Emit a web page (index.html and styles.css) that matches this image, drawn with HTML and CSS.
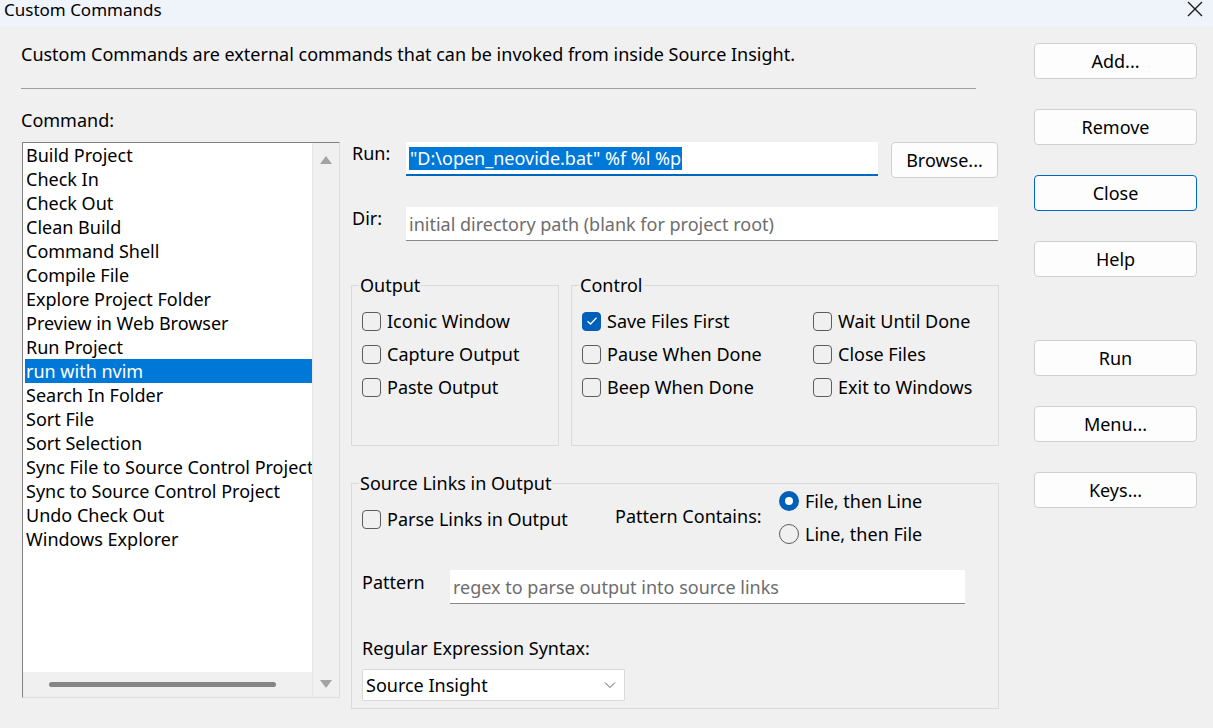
FILE: index.html
```html
<!DOCTYPE html>
<html>
<head>
<meta charset="utf-8">
<link rel="stylesheet" href="styles.css">
</head>
<body>
<div class="window">
  <div class="titlebar">
    <span class="title">Custom Commands</span>
    <svg class="close-x" width="16" height="16" viewBox="0 0 16 16"><path d="M1 1 L15 15 M15 1 L1 15" stroke="#1a1a1a" stroke-width="1.4" fill="none"/></svg>
  </div>
  <div class="content">
    <div class="main">
      <p class="desc">Custom Commands are external commands that can be invoked from inside Source Insight.</p>
      <div class="rule"></div>
      <div class="cmd-label">Command:</div>
      <div class="work">
        <div class="listbox">
          <div class="list-items">
            <div class="item">Build Project</div>
            <div class="item">Check In</div>
            <div class="item">Check Out</div>
            <div class="item">Clean Build</div>
            <div class="item">Command Shell</div>
            <div class="item">Compile File</div>
            <div class="item">Explore Project Folder</div>
            <div class="item">Preview in Web Browser</div>
            <div class="item">Run Project</div>
            <div class="item selected">run with nvim</div>
            <div class="item">Search In Folder</div>
            <div class="item">Sort File</div>
            <div class="item">Sort Selection</div>
            <div class="item">Sync File to Source Control Project</div>
            <div class="item">Sync to Source Control Project</div>
            <div class="item">Undo Check Out</div>
            <div class="item">Windows Explorer</div>
          </div>
          <div class="vscroll">
            <svg class="arrow" width="12" height="8" viewBox="0 0 12 8"><path d="M6 0 L12 8 L0 8 Z" fill="#a3a3a3"/></svg>
            <svg class="arrow" width="12" height="8" viewBox="0 0 12 8"><path d="M0 0 L12 0 L6 8 Z" fill="#a3a3a3"/></svg>
          </div>
          <div class="hscroll"><div class="hthumb"></div></div>
        </div>
        <div class="panel">
          <div class="field-row run-row">
            <span class="field-label">Run:</span>
            <div class="textbox active"><span class="sel">"D:\open_neovide.bat" %f %l %p</span></div>
            <button class="btn browse">Browse...</button>
          </div>
          <div class="field-row dir-row">
            <span class="field-label">Dir:</span>
            <div class="textbox wide"><span class="placeholder">initial directory path (blank for project root)</span></div>
          </div>
          <div class="groups">
            <fieldset class="group output">
              <legend>Output</legend>
              <div class="checks">
                <label class="check"><span class="box"></span>Iconic Window</label>
                <label class="check"><span class="box"></span>Capture Output</label>
                <label class="check"><span class="box"></span>Paste Output</label>
              </div>
            </fieldset>
            <fieldset class="group control">
              <legend>Control</legend>
              <div class="control-grid">
                <label class="check"><span class="box checked"><svg width="12" height="10" viewBox="0 0 12 10"><path d="M1.5 5.2 L4.5 8 L10.5 1.8" stroke="#fff" stroke-width="1.3" fill="none"/></svg></span>Save Files First</label>
                <label class="check"><span class="box"></span>Wait Until Done</label>
                <label class="check"><span class="box"></span>Pause When Done</label>
                <label class="check"><span class="box"></span>Close Files</label>
                <label class="check"><span class="box"></span>Beep When Done</label>
                <label class="check"><span class="box"></span>Exit to Windows</label>
              </div>
            </fieldset>
          </div>
          <fieldset class="group links">
            <legend>Source Links in Output</legend>
            <div class="links-top">
              <label class="check parse"><span class="box"></span>Parse Links in Output</label>
              <span class="pc-label">Pattern Contains:</span>
              <div class="radios">
                <label class="radio"><span class="dot on"></span>File, then Line</label>
                <label class="radio"><span class="dot"></span>Line, then File</label>
              </div>
            </div>
            <div class="pattern-row">
              <span class="pattern-label">Pattern</span>
              <div class="textbox pattern"><span class="placeholder">regex to parse output into source links</span></div>
            </div>
            <div class="syntax-label">Regular Expression Syntax:</div>
            <div class="combo">
              <span>Source Insight</span>
              <svg width="12" height="8" viewBox="0 0 12 8"><path d="M1 1.5 L6 6.5 L11 1.5" stroke="#5c5c5c" stroke-width="1" fill="none"/></svg>
            </div>
          </fieldset>
        </div>
      </div>
    </div>
    <div class="buttons">
      <button class="btn side">Add...</button>
      <button class="btn side">Remove</button>
      <button class="btn side default">Close</button>
      <button class="btn side">Help</button>
      <button class="btn side run">Run</button>
      <button class="btn side">Menu...</button>
      <button class="btn side">Keys...</button>
    </div>
  </div>
</div>
</body>
</html>
```

FILE: styles.css
```css
* { box-sizing: border-box; }
html, body { margin: 0; padding: 0; }
body {
  width: 1213px;
  height: 728px;
  overflow: hidden;
  background: #f0f0f0;
  font-family: "Noto Sans", "Open Sans", sans-serif;
  font-size: 18px;
  color: #000;
}
.window { width: 1213px; height: 728px; display: flex; flex-direction: column; }
.titlebar {
  height: 27px;
  background: #eff3fa;
  display: flex;
  align-items: flex-start;
  justify-content: space-between;
  padding: 0 10px 0 4px;
}
.title { font-size: 17px; line-height: 20px; }
.close-x { margin-top: 1px; }
.content { flex: 1; display: flex; }
.main { width: 1000px; padding-left: 21px; }
.desc { margin: 15px 0 0; line-height: 24px; }
.rule { width: 955px; height: 1px; background: #a0a0a0; margin-top: 22px; }
.cmd-label { margin-top: 19px; line-height: 24px; }
.work { display: flex; margin-top: 10px; gap: 11px; }
.listbox {
  margin-left: 1px;
  width: 318px;
  height: 556px;
  background: #fff;
  border-top: 1px solid #828282;
  border-left: 1px solid #828282;
  border-right: 1px solid #dedede;
  border-bottom: 1px solid #dedede;
  display: grid;
  grid-template-columns: 289px 27px;
  grid-template-rows: 1fr 25px;
}
.list-items { overflow: hidden; padding: 0 0 0 2px; }
.item { height: 24px; line-height: 24px; white-space: nowrap; padding-left: 1px; }
.item.selected { background: #0078d7; color: #fff; }
.vscroll {
  grid-row: 1 / 3;
  grid-column: 2;
  background: #f0f0f0;
  border-left: 1px solid #e6e6e6;
  display: flex;
  flex-direction: column;
  justify-content: space-between;
  align-items: center;
  padding: 13px 0 9px;
}
.hscroll {
  grid-row: 2;
  grid-column: 1;
  background: #f0f0f0;
  display: flex;
  align-items: center;
  padding-left: 26px;
}
.hthumb { width: 227px; height: 5px; border-radius: 3px; background: #858585; }
.panel { width: 648px; display: flex; flex-direction: column; }
.field-row { display: flex; align-items: flex-start; }
.field-label { width: 55px; padding-left: 1px; line-height: 24px; margin-top: -1px; }
.textbox {
  height: 34px;
  background: #fff;
  border-bottom: 1px solid #8a8a8a;
  display: flex;
  align-items: center;
  padding-left: 3px;
  white-space: nowrap;
  overflow: hidden;
}
.textbox.active { width: 472px; border-bottom: 2px solid #0067c0; }
.sel { background: #0078d7; color: #fff; line-height: 23px; padding: 0 1px; }
.textbox.wide { width: 592px; }
.placeholder { color: #6d6d6d; }
.dir-row { margin-top: 29px; }
.btn {
  font: inherit;
  color: #000;
  background: #fdfdfd;
  border: 1px solid #d0d0d0;
  border-radius: 4px;
  height: 36px;
  padding: 0;
}
.browse { width: 107px; margin-left: 13px; }
.groups { display: flex; gap: 12px; margin-top: 32px; }
.group {
  margin: 0;
  border: 1px solid #dadada;
  padding: 0 8px;
}
.group legend { padding: 0 1px; line-height: 24px; margin-left: -1px; }
.output { width: 208px; height: 173px; }
.control { width: 428px; height: 173px; }
.checks { display: flex; flex-direction: column; gap: 9px; padding-top: 12px; }
.check { display: flex; align-items: center; height: 24px; white-space: nowrap; }
.box {
  width: 19px; height: 19px;
  border: 1px solid #5c5c5c;
  border-radius: 4px;
  margin: 0 6px 0 2px;
  display: flex; align-items: center; justify-content: center;
  flex: none;
}
.box.checked { background: #005fb8; border-color: #005fb8; }
.control-grid {
  display: grid;
  grid-template-columns: 231px 1fr;
  row-gap: 9px;
  padding-top: 12px;
}
.links { width: 648px; height: 238px; margin-top: 25px; }
.links-top { display: flex; align-items: flex-start; }
.parse { margin-top: 12px; width: 255px; }
.pc-label { line-height: 24px; margin-top: 9px; width: 164px; }
.radios { display: flex; flex-direction: column; gap: 9px; margin-top: -6px; }
.radio { display: flex; align-items: center; height: 24px; white-space: nowrap; }
.dot {
  width: 20px; height: 20px;
  border-radius: 50%;
  border: 1px solid #5c5c5c;
  margin-right: 6px;
  flex: none;
}
.dot.on { border: 6px solid #005fb8; background: #fff; }
.pattern-row { display: flex; align-items: flex-start; margin-top: 24px; }
.pattern-label { width: 90px; padding-left: 2px; line-height: 24px; }
.textbox.pattern { width: 515px; }
.syntax-label { margin-top: 32px; padding-left: 2px; line-height: 24px; }
.combo {
  margin: 9px 0 0 2px;
  width: 263px;
  height: 32px;
  background: #fff;
  border: 1px solid #d9d9d9;
  border-radius: 2px;
  display: flex;
  align-items: center;
  justify-content: space-between;
  padding: 0 8px 0 3px;
}
.buttons {
  width: 163px;
  margin-left: 34px;
  padding-top: 16px;
  display: flex;
  flex-direction: column;
  gap: 30px;
}
.side { width: 163px; }
.side.default { border-color: #0067c0; }
.side.run { margin-top: 33px; }
```
